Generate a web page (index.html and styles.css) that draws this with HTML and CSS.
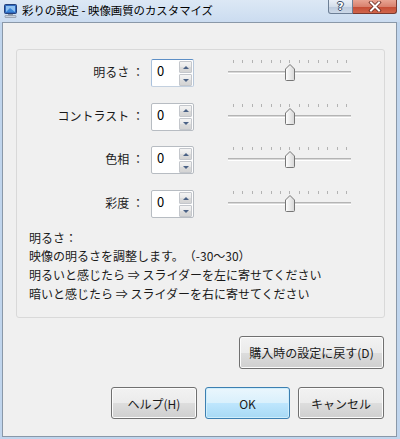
FILE: index.html
```html
<!DOCTYPE html>
<html lang="ja">
<head>
<meta charset="utf-8">
<title>彩りの設定</title>
<link rel="stylesheet" href="styles.css">
</head>
<body>
<div class="window">
  <div class="titlebar">
    <svg class="app-icon" width="15" height="15" viewBox="0 0 15 15">
      <rect x="1.5" y="1.5" width="12" height="9" rx="1" fill="#2f6bbf" stroke="#24407a"/>
      <rect x="3" y="3" width="9" height="6" fill="#8fc2f2"/>
      <path d="M3 9 L7 5 L12 9 Z" fill="#3a86d8"/>
      <rect x="5" y="11" width="5" height="1.5" fill="#8a96a6"/>
      <rect x="2" y="12.5" width="11" height="2" rx="0.5" fill="#c9d1dc" stroke="#7b8797" stroke-width="0.6"/>
    </svg>
    <span class="title">彩りの設定 - 映像画質のカスタマイズ</span>
    <div class="caption-btns">
      <div class="cap cap-help">?</div>
      <div class="cap cap-close">
        <svg width="14" height="11" viewBox="0 0 14 11">
          <path d="M3 1.5 L11 9.5 M11 1.5 L3 9.5" stroke="#6b2a20" stroke-width="3.6" stroke-linecap="square"/>
          <path d="M3 1.5 L11 9.5 M11 1.5 L3 9.5" stroke="#ffffff" stroke-width="2" stroke-linecap="square"/>
        </svg>
      </div>
    </div>
  </div>
  <div class="client">
    <div class="panel">
      <div class="rows">
        <div class="label">明るさ ：</div>
        <div class="spin focus"><div class="val">0</div><div class="arrows"><span class="arr up"></span><span class="arr down"></span></div></div>
        <svg class="slider" width="124" height="24" viewBox="0 0 124 24">
          <defs><linearGradient id="th" x1="0" y1="0" x2="1" y2="0"><stop offset="0" stop-color="#ffffff"/><stop offset="1" stop-color="#d6d6d6"/></linearGradient></defs>
          <path d="M5.5 1V4M14.5 1V4M24.5 1V4M33.5 1V4M43.5 1V4M52.5 1V4M61.5 1V4M71.5 1V4M80.5 1V4M90.5 1V4M99.5 1V4M109.5 1V4M118.5 1V4" stroke="#b3b3b3" stroke-width="1"/>
          <rect x="0" y="12" width="123" height="1" fill="#b4b4b4"/>
          <rect x="0" y="13" width="123" height="1" fill="#d9d9d9"/>
          <rect x="0" y="14" width="123" height="1" fill="#ffffff"/>
          <path d="M57.5 10 L62 5.5 L66.5 10 V20.5 Q66.5 21.5 65.5 21.5 H58.5 Q57.5 21.5 57.5 20.5 Z" fill="url(#th)" stroke="#767676"/>
        </svg>

        <div class="label">コントラスト ：</div>
        <div class="spin"><div class="val">0</div><div class="arrows"><span class="arr up"></span><span class="arr down"></span></div></div>
        <svg class="slider" width="124" height="24" viewBox="0 0 124 24">
          <path d="M5.5 1V4M14.5 1V4M24.5 1V4M33.5 1V4M43.5 1V4M52.5 1V4M61.5 1V4M71.5 1V4M80.5 1V4M90.5 1V4M99.5 1V4M109.5 1V4M118.5 1V4" stroke="#b3b3b3" stroke-width="1"/>
          <rect x="0" y="12" width="123" height="1" fill="#b4b4b4"/>
          <rect x="0" y="13" width="123" height="1" fill="#d9d9d9"/>
          <rect x="0" y="14" width="123" height="1" fill="#ffffff"/>
          <path d="M57.5 10 L62 5.5 L66.5 10 V20.5 Q66.5 21.5 65.5 21.5 H58.5 Q57.5 21.5 57.5 20.5 Z" fill="url(#th)" stroke="#767676"/>
        </svg>

        <div class="label">色相 ：</div>
        <div class="spin"><div class="val">0</div><div class="arrows"><span class="arr up"></span><span class="arr down"></span></div></div>
        <svg class="slider" width="124" height="24" viewBox="0 0 124 24">
          <path d="M5.5 1V4M14.5 1V4M24.5 1V4M33.5 1V4M43.5 1V4M52.5 1V4M61.5 1V4M71.5 1V4M80.5 1V4M90.5 1V4M99.5 1V4M109.5 1V4M118.5 1V4" stroke="#b3b3b3" stroke-width="1"/>
          <rect x="0" y="12" width="123" height="1" fill="#b4b4b4"/>
          <rect x="0" y="13" width="123" height="1" fill="#d9d9d9"/>
          <rect x="0" y="14" width="123" height="1" fill="#ffffff"/>
          <path d="M57.5 10 L62 5.5 L66.5 10 V20.5 Q66.5 21.5 65.5 21.5 H58.5 Q57.5 21.5 57.5 20.5 Z" fill="url(#th)" stroke="#767676"/>
        </svg>

        <div class="label">彩度 ：</div>
        <div class="spin"><div class="val">0</div><div class="arrows"><span class="arr up"></span><span class="arr down"></span></div></div>
        <svg class="slider" width="124" height="24" viewBox="0 0 124 24">
          <path d="M5.5 1V4M14.5 1V4M24.5 1V4M33.5 1V4M43.5 1V4M52.5 1V4M61.5 1V4M71.5 1V4M80.5 1V4M90.5 1V4M99.5 1V4M109.5 1V4M118.5 1V4" stroke="#b3b3b3" stroke-width="1"/>
          <rect x="0" y="12" width="123" height="1" fill="#b4b4b4"/>
          <rect x="0" y="13" width="123" height="1" fill="#d9d9d9"/>
          <rect x="0" y="14" width="123" height="1" fill="#ffffff"/>
          <path d="M57.5 10 L62 5.5 L66.5 10 V20.5 Q66.5 21.5 65.5 21.5 H58.5 Q57.5 21.5 57.5 20.5 Z" fill="url(#th)" stroke="#767676"/>
        </svg>
      </div>
      <div class="desc">
        <p>明るさ：</p>
        <p>映像の明るさを調整します。（-30～30）</p>
        <p>明るいと感じたら ⇒ スライダーを左に寄せてください</p>
        <p>暗いと感じたら ⇒ スライダーを右に寄せてください</p>
      </div>
    </div>
    <div class="reset-row">
      <button class="btn btn-reset">購入時の設定に戻す(D)</button>
    </div>
    <div class="btn-row">
      <button class="btn">ヘルプ(H)</button>
      <button class="btn btn-default">OK</button>
      <button class="btn">キャンセル</button>
    </div>
  </div>
</div>
</body>
</html>
```
FILE: styles.css
```css
* { box-sizing: border-box; }
html, body {
  margin: 0;
  padding: 0;
}
body {
  width: 400px;
  height: 439px;
  overflow: hidden;
  font-family: "Noto Sans CJK JP", "Noto Sans", sans-serif;
  font-size: 12px;
  color: #1a1a1a;
  text-spacing-trim: space-all;
}
.window {
  width: 400px;
  height: 439px;
  background: #c0d5ed;
  display: flex;
  flex-direction: column;
}
.titlebar {
  height: 22px;
  display: flex;
  align-items: flex-start;
  background: linear-gradient(#dce8f5, #cbdcf0);
  padding-left: 3px;
  padding-right: 3px;
}
.app-icon {
  margin-top: 3px;
  flex: none;
}
.title {
  margin-left: 4px;
  font-size: 11.4px;
  line-height: 21px;
  color: #000;
  white-space: nowrap;
}
.caption-btns {
  margin-left: auto;
  display: flex;
}
.cap {
  height: 14px;
  display: flex;
  align-items: center;
  justify-content: center;
}
.cap-help {
  width: 25px;
  border: 1px solid #6d7f96;
  border-top: none;
  border-radius: 0 0 0 3px;
  background: linear-gradient(#e9eff7 0%, #d4deeb 50%, #bccadd 51%, #cdd9e8 100%);
  color: #fff;
  font-family: "DejaVu Sans", sans-serif;
  font-weight: bold;
  font-size: 11px;
  line-height: 12px;
  text-shadow: 0 0 1px #2b3a55, 1px 0 0 #41526e, -1px 0 0 #41526e, 0 1px 0 #41526e, 0 -1px 0 #41526e;
}
.cap-close {
  width: 44px;
  border: 1px solid #7a3a30;
  border-top: none;
  border-left: none;
  border-radius: 0 0 3px 0;
  background: linear-gradient(#e8a493 0%, #d9826f 50%, #c44a33 51%, #d0664c 100%);
}
.client {
  margin-left: 2px;
  width: 395px;
  height: 415px;
  background: #f0f0f0;
  border: 1px solid #8a98a8;
  display: flex;
  flex-direction: column;
}
.panel {
  margin: 26px 11px 0 13px;
  border: 1px solid #d9d9d9;
  border-radius: 3px;
  padding: 9px 0 14px 0;
}
.rows {
  display: grid;
  grid-template-columns: 127px 43px 124px;
  column-gap: 7px;
  row-gap: 15.7px;
  align-items: start;
}
.label {
  height: 28px;
  line-height: 28px;
  text-align: right;
  white-space: nowrap;
  margin-top: -1px;
}
.spin {
  width: 43px;
  height: 28px;
  border: 1px solid #b7bcc2;
  border-radius: 2px;
  background: #fff;
  display: flex;
}
.spin.focus {
  border-color: #7da2ce #b7c7da #c3d0df #a9c1dd;
  border-top-color: #5d8fc6;
}
.val {
  flex: 1;
  padding: 2px 0 0 5px;
  font-size: 13px;
  line-height: 18px;
  color: #000;
}
.arrows {
  width: 14px;
  padding: 1px 1px 0 0;
  display: flex;
  flex-direction: column;
  gap: 1px;
}
.arr {
  height: 12px;
  border: 1px solid #c4c7cc;
  border-radius: 1px;
  background: linear-gradient(#f4f4f4 0%, #e8e8e8 50%, #dcdcdc 51%, #d4d4d4 100%);
  display: flex;
  align-items: center;
  justify-content: center;
}
.arr::after {
  content: "";
  width: 0;
  height: 0;
  border-left: 3px solid transparent;
  border-right: 3px solid transparent;
}
.arr.up::after { border-bottom: 3px solid #4b6286; }
.arr.down::after { border-top: 3px solid #4b6286; }
.slider {
  display: block;
  margin-left: 27px;
}
.desc {
  margin-top: 10.5px;
  padding-left: 12px;
}
.desc p {
  margin: 0;
  line-height: 18.7px;
  white-space: nowrap;
}
.reset-row {
  margin-top: 18px;
  display: flex;
  justify-content: flex-end;
  padding-right: 12px;
}
.btn-row {
  margin-top: 18px;
  display: flex;
  justify-content: flex-end;
  gap: 8px;
  padding-right: 12px;
}
.btn {
  font-family: "Noto Sans CJK JP", "Noto Sans", sans-serif;
  font-size: 12px;
  color: #1a1a1a;
  height: 32px;
  width: 86px;
  padding: 0;
  border: 1px solid #707070;
  border-radius: 3px;
  background: linear-gradient(#f2f2f2 0%, #ebebeb 50%, #dddddd 51%, #cfcfcf 100%);
  box-shadow: inset 0 0 0 1px #fcfcfc;
  text-spacing-trim: space-all;
}
.btn-reset {
  width: 145px;
  height: 33px;
}
.btn-default {
  width: 85px;
  border-color: #3c7fb1;
  background: linear-gradient(#eaf6fd 0%, #d9f0fc 50%, #bee6fd 51%, #a7d9f5 100%);
  box-shadow: inset 0 0 0 1px #cfeefc;
}
```
